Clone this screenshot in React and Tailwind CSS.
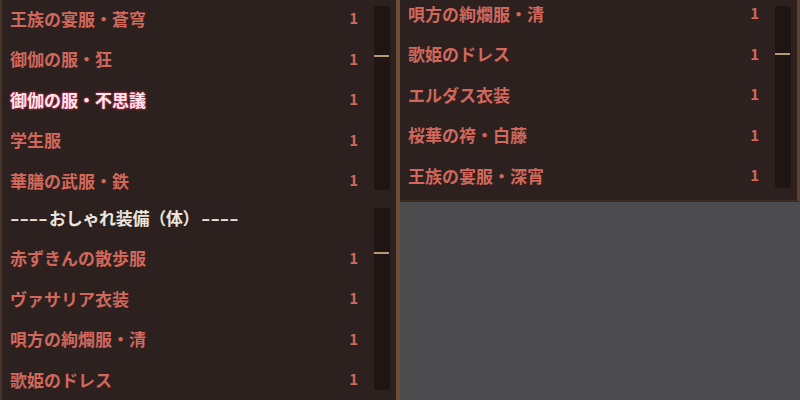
const topLeft = [
  { name: "王族の宴服・蒼穹", count: 1 },
  { name: "御伽の服・狂", count: 1 },
  { name: "御伽の服・不思議", count: 1, active: true },
  { name: "学生服", count: 1 },
  { name: "華膳の武服・鉄", count: 1 },
];

const bottomLeft = [
  { header: "おしゃれ装備（体）" },
  { name: "赤ずきんの散歩服", count: 1 },
  { name: "ヴァサリア衣装", count: 1 },
  { name: "唄方の絢爛服・清", count: 1 },
  { name: "歌姫のドレス", count: 1 },
];

const topRight = [
  { name: "唄方の絢爛服・清", count: 1 },
  { name: "歌姫のドレス", count: 1 },
  { name: "エルダス衣装", count: 1 },
  { name: "桜華の袴・白藤", count: 1 },
  { name: "王族の宴服・深宵", count: 1 },
];

function Dashes({ className = "" }) {
  return (
    <span className={`inline-block w-[39px] overflow-visible ${className}`}>
      <span className="inline-block origin-left scale-x-[1.5]">----</span>
    </span>
  );
}

function Row({ item }) {
  if (item.header) {
    return (
      <div className="flex items-center h-[40.6px] pl-[8px] text-[#ece4dc]">
        <Dashes />
        <span className="tracking-[-0.3px]">{item.header}</span>
        <Dashes className="ml-[2px]" />
      </div>
    );
  }
  return (
    <div className="flex items-center h-[40.6px] pl-[8px] pr-[16px]">
      <span
        className={
          item.active
            ? "flex-1 text-[#ffe6ee] [text-shadow:0_0_2px_#c2304c,0_0_3px_#c2304c]"
            : "flex-1 text-[#d2675c]"
        }
      >
        {item.name}
      </span>
      <span className="text-[#d2675c] text-[15px]">{item.count}</span>
    </div>
  );
}

function Panel({ items, offset, thumb, trackTop, trackBottom }) {
  return (
    <div className="relative h-[200px] bg-[#2c211f] flex overflow-hidden">
      <div className={`flex-1 ${offset}`}>
        {items.map((item, i) => (
          <Row key={i} item={item} />
        ))}
      </div>
      <div className={`w-[16px] mr-[6px] ${trackTop} ${trackBottom} bg-[#1f1614] rounded-[2px] relative`}>
        <div className={`absolute left-0 right-[1px] h-[2px] bg-[#b39a7e] ${thumb}`} />
      </div>
    </div>
  );
}

export default function App() {
  return (
    <div
      className="w-[800px] h-[400px] flex bg-[#4b4b4d] font-bold text-[17px] overflow-hidden"
      style={{ fontFamily: '"Noto Sans CJK JP", "Noto Sans", sans-serif' }}
    >
      <div className="w-[400px] h-[400px] border-l-[2px] border-[#473227] border-r-[4px] border-r-[#6b4d38] flex flex-col">
        <Panel items={topLeft} offset="-mt-[2px]" thumb="top-[49px]" trackTop="mt-[6px]" trackBottom="mb-[10px]" />
        <Panel items={bottomLeft} offset="-mt-[3px]" thumb="top-[44px]" trackTop="mt-[8px]" trackBottom="mb-[10px]" />
      </div>
      <div className="w-[400px] flex flex-col">
        <div className="border-r-[3px] border-[#5b4232] border-b-[2px] border-b-[#3a2a24]">
          <Panel items={topRight} offset="-mt-[7px]" thumb="top-[47px]" trackTop="mt-[6px]" trackBottom="mb-[12px]" />
        </div>
        <div className="flex-1 bg-[#4b4b4d]" />
      </div>
    </div>
  );
}
